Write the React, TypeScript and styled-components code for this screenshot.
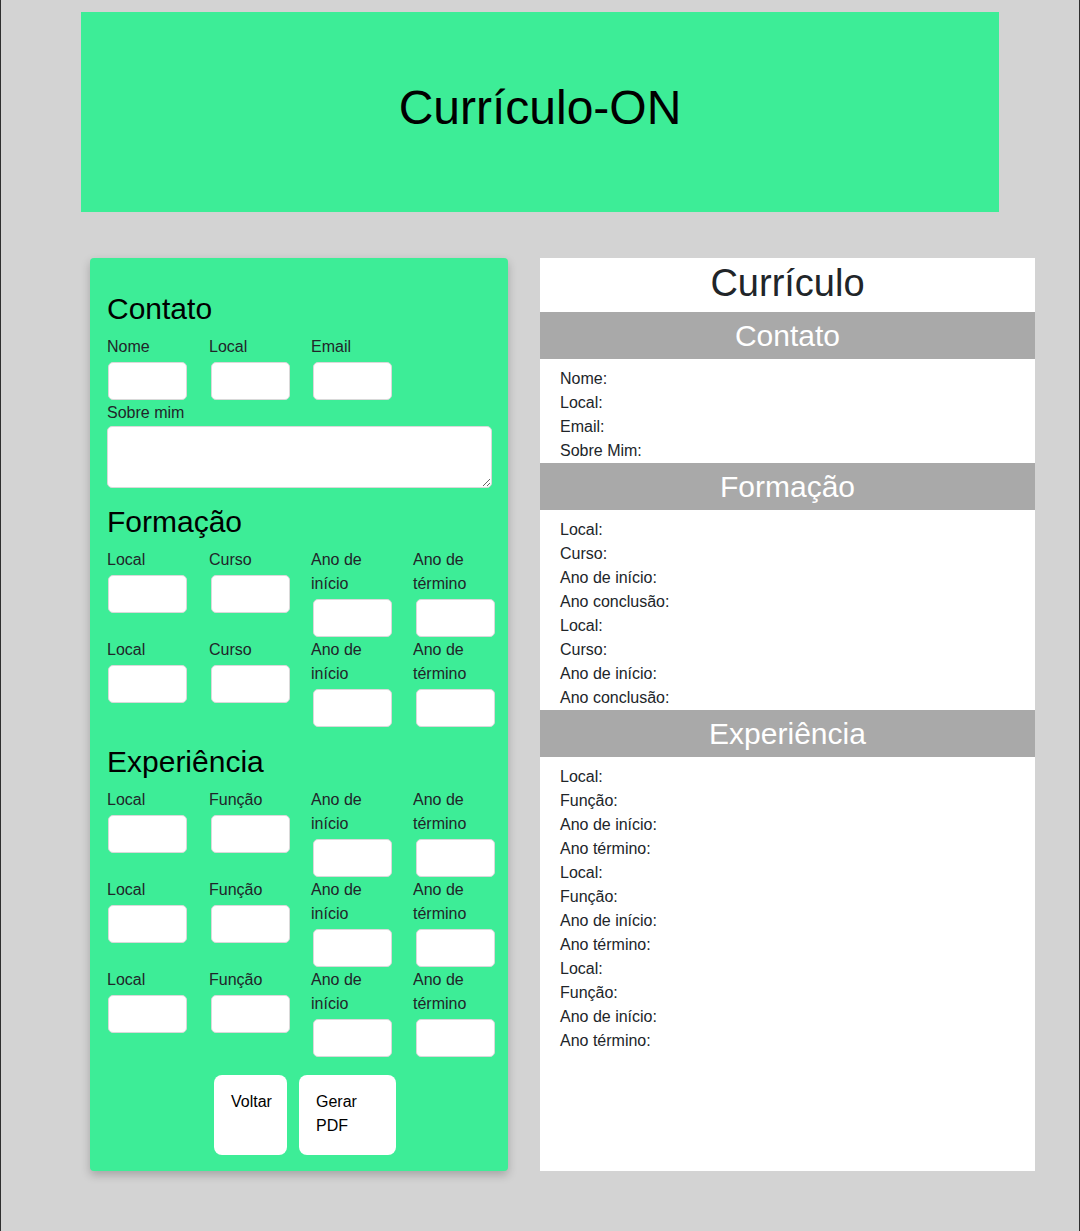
import React from "react";
import styled, { createGlobalStyle } from "styled-components";

const GlobalStyle = createGlobalStyle`
  * {
    box-sizing: border-box;
  }
  body {
    margin: 0;
    background: #d3d3d3;
    font-family: "Liberation Sans", Arial, sans-serif;
  }
`;

type FieldDef = { label: string };

const formacaoRow: FieldDef[] = [
  { label: "Local" },
  { label: "Curso" },
  { label: "Ano de início" },
  { label: "Ano de término" },
];

const experienciaRow: FieldDef[] = [
  { label: "Local" },
  { label: "Função" },
  { label: "Ano de início" },
  { label: "Ano de término" },
];

const FieldRow = ({ fields }: { fields: FieldDef[] }) => (
  <StyledRow>
    {fields.map((f, i) => (
      <Field key={i}>
        <FieldLabel>{f.label}</FieldLabel>
        <FieldInput type="text" $shift={i === 0 ? 1 : i === 3 ? 3 : 2} />
      </Field>
    ))}
  </StyledRow>
);

const App = () => {
  return (
    <Page>
      <GlobalStyle />
      <Header>
        <HeaderTitle>Currículo-ON</HeaderTitle>
      </Header>
      <Main>
        <FormPanel>
          <Section>
            <SectionTitle>Contato</SectionTitle>
            <StyledRow>
              <Field>
                <FieldLabel>Nome</FieldLabel>
                <FieldInput type="text" $shift={1} />
              </Field>
              <Field>
                <FieldLabel>Local</FieldLabel>
                <FieldInput type="text" $shift={2} />
              </Field>
              <Field>
                <FieldLabel>Email</FieldLabel>
                <FieldInput type="text" $shift={2} />
              </Field>
            </StyledRow>
            <FieldLabel>Sobre mim</FieldLabel>
            <AboutArea />
          </Section>
          <Section>
            <SectionTitle>Formação</SectionTitle>
            <FieldRow fields={formacaoRow} />
            <FieldRow fields={formacaoRow} />
          </Section>
          <Section>
            <SectionTitle>Experiência</SectionTitle>
            <FieldRow fields={experienciaRow} />
            <FieldRow fields={experienciaRow} />
            <FieldRow fields={experienciaRow} />
          </Section>
          <ButtonBar>
            <ActionButton $width={73} $nowrap>
              Voltar
            </ActionButton>
            <ActionButton $width={97}>Gerar PDF</ActionButton>
          </ButtonBar>
        </FormPanel>
        <Preview>
          <PreviewTitle>Currículo</PreviewTitle>
          <PreviewBand>Contato</PreviewBand>
          <PreviewList>
            <PreviewItem>Nome:</PreviewItem>
            <PreviewItem>Local:</PreviewItem>
            <PreviewItem>Email:</PreviewItem>
            <PreviewItem>Sobre Mim:</PreviewItem>
          </PreviewList>
          <PreviewBand>Formação</PreviewBand>
          <PreviewList>
            {[0, 1].map((n) => (
              <React.Fragment key={n}>
                <PreviewItem>Local:</PreviewItem>
                <PreviewItem>Curso:</PreviewItem>
                <PreviewItem>Ano de início:</PreviewItem>
                <PreviewItem>Ano conclusão:</PreviewItem>
              </React.Fragment>
            ))}
          </PreviewList>
          <PreviewBand>Experiência</PreviewBand>
          <PreviewList>
            {[0, 1, 2].map((n) => (
              <React.Fragment key={n}>
                <PreviewItem>Local:</PreviewItem>
                <PreviewItem>Função:</PreviewItem>
                <PreviewItem>Ano de início:</PreviewItem>
                <PreviewItem>Ano término:</PreviewItem>
              </React.Fragment>
            ))}
          </PreviewList>
        </Preview>
      </Main>
    </Page>
  );
};

const Page = styled.div`
  min-height: 1231px;
  border-left: 1px solid #2e2e2e;
  border-right: 1px solid #2e2e2e;
  padding-top: 12px;
  padding-bottom: 60px;
`;

const Header = styled.header`
  width: 918px;
  height: 200px;
  margin: 0 auto;
  background: #3ded97;
  display: flex;
  align-items: center;
  justify-content: center;
`;

const HeaderTitle = styled.h1`
  margin: 0 0 9px;
  font-size: 48px;
  font-weight: normal;
  color: #000;
`;

const Main = styled.main`
  display: flex;
  align-items: stretch;
  gap: 32px;
  margin-top: 46px;
  padding-left: 89px;
`;

const FormPanel = styled.div`
  width: 418px;
  flex-shrink: 0;
  background: #3ded97;
  border-radius: 4px;
  box-shadow: 0 4px 10px rgba(0, 0, 0, 0.22);
  padding: 34px 17px 16px;
`;

const Section = styled.section`
  margin-bottom: 17px;
`;

const SectionTitle = styled.h2`
  margin: 0 0 9px;
  font-size: 30px;
  line-height: 34px;
  font-weight: normal;
  color: #000;
`;

const StyledRow = styled.div`
  display: grid;
  grid-template-columns: repeat(4, 80px);
  column-gap: 22px;
  align-items: start;
`;

const Field = styled.div`
  display: flex;
  flex-direction: column;
`;

const FieldLabel = styled.label`
  display: block;
  font-size: 16px;
  line-height: 24px;
  color: #212529;
`;

const FieldInput = styled.input<{ $shift: number }>`
  width: 79px;
  height: 38px;
  margin: 3px 0 1px ${(p) => p.$shift}px;
  background: #fff;
  border: 1px solid #d9d9d9;
  border-radius: 5px;
  font-size: 16px;
  padding: 4px 8px;
  outline: none;
`;

const AboutArea = styled.textarea`
  display: block;
  width: 385px;
  height: 62px;
  margin-top: 1px;
  background: #fff;
  border: 1px solid #d9d9d9;
  border-radius: 5px;
  font-family: inherit;
  font-size: 16px;
  padding: 4px 8px;
  outline: none;
`;

const ButtonBar = styled.div`
  display: flex;
  justify-content: center;
  gap: 12px;
  padding-left: 12px;
`;

const ActionButton = styled.button<{ $width: number; $nowrap?: boolean }>`
  width: ${(p) => p.$width}px;
  height: 80px;
  padding: 15px 15px 15px 17px;
  background: #fff;
  border: none;
  border-radius: 8px;
  font-family: inherit;
  font-size: 16px;
  line-height: 24px;
  color: #000;
  text-align: left;
  display: flex;
  align-items: flex-start;
  white-space: ${(p) => (p.$nowrap ? "nowrap" : "normal")};
  cursor: pointer;
`;

const Preview = styled.div`
  width: 495px;
  flex-shrink: 0;
  background: #fff;
`;

const PreviewTitle = styled.h1`
  margin: 0;
  padding-bottom: 4px;
  font-size: 38px;
  line-height: 50px;
  font-weight: normal;
  text-align: center;
  color: #212529;
`;

const PreviewBand = styled.h2`
  margin: 0;
  height: 47px;
  line-height: 47px;
  background: #a9a9a9;
  color: #fff;
  font-size: 30px;
  font-weight: normal;
  text-align: center;
`;

const PreviewList = styled.div`
  padding: 8px 20px 0;
`;

const PreviewItem = styled.p`
  margin: 0;
  font-size: 16px;
  line-height: 24px;
  color: #212529;
`;

export default App;
